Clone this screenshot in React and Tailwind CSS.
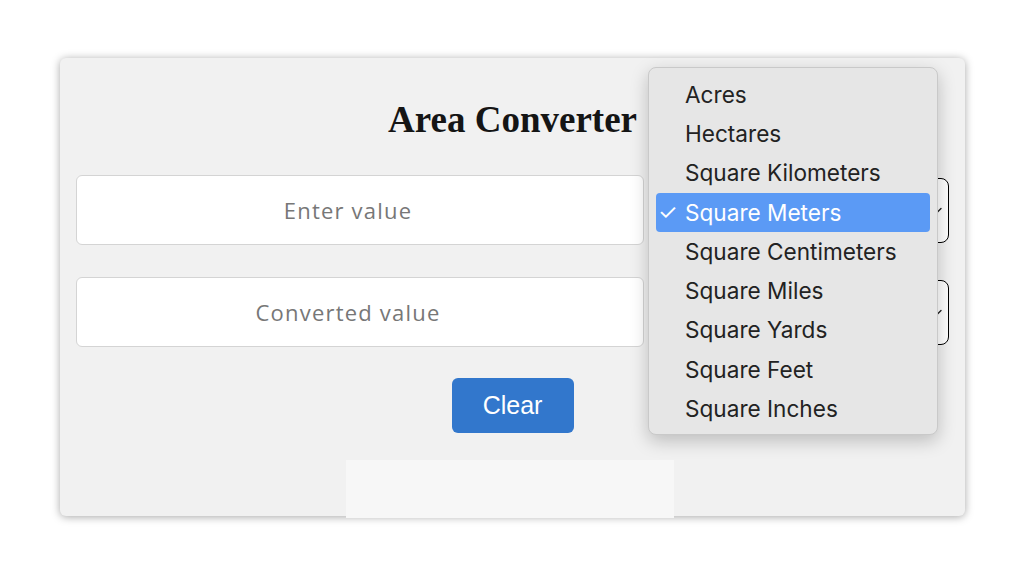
import { useState } from 'react'

const units = [
    'Acres',
    'Hectares',
    'Square Kilometers',
    'Square Meters',
    'Square Centimeters',
    'Square Miles',
    'Square Yards',
    'Square Feet',
    'Square Inches',
]

function UnitSelect() {
    return (
        <div className="relative w-[299px] h-[65px] rounded-[8px] border border-black bg-white">
            <svg className="absolute right-[6px] top-[28px]" width="12" height="8" viewBox="0 0 12 8" fill="none">
                <path d="M1 1.5 L6 6.5 L11 1.5" stroke="#222" strokeWidth="1.4" strokeLinecap="round" />
            </svg>
        </div>
    )
}

export default function App() {
    const [value, setValue] = useState('')
    const [selected] = useState('Square Meters')

    return (
        <div className="w-[1024px] h-[576px] bg-white pt-[58px] pl-[60px]">
            <div className="relative w-[905px] h-[458px] rounded-[6px] bg-[#f1f1f1] shadow-[0_1px_8px_rgba(0,0,0,0.35)] px-[16px] pt-[97px] flex flex-col">
                {/* titolo */}
                <h1
                    className="absolute left-0 right-0 top-[40px] text-center text-[37px] leading-[44px] font-bold text-[#151515]"
                    style={{ fontFamily: '"Liberation Serif", serif' }}
                >
                    Area Converter
                </h1>

                {/* riga input */}
                <div className="flex items-center gap-[6px] mt-[20px]">
                    <input
                        value={value}
                        onChange={e => setValue(e.target.value)}
                        placeholder="Enter value"
                        className="w-[568px] h-[70px] rounded-[6px] border border-[#d4d4d4] bg-white pr-[24px] text-center text-[22px] tracking-[1.2px] text-[#333] placeholder:text-[#777] outline-none"
                        style={{ fontFamily: '"Open Sans", sans-serif' }}
                    />
                    <UnitSelect />
                </div>

                <div className="flex items-center gap-[6px] mt-[32px]">
                    <input
                        readOnly
                        placeholder="Converted value"
                        className="w-[568px] h-[70px] rounded-[6px] border border-[#d4d4d4] bg-white pr-[24px] text-center text-[22px] tracking-[1.2px] placeholder:text-[#777] outline-none"
                        style={{ fontFamily: '"Open Sans", sans-serif' }}
                    />
                    <UnitSelect />
                </div>

                <div className="flex justify-center mt-[31px]">
                    <button
                        onClick={() => setValue('')}
                        className="w-[122px] h-[55px] rounded-[6px] bg-[#3277cc] text-white text-[25px]"
                        style={{ fontFamily: '"Liberation Sans", Arial, sans-serif' }}
                    >
                        Clear
                    </button>
                </div>

                <div className="mt-[27px] mb-[-3px] self-center ml-[-6px] w-[328px] h-[58px] bg-[#f7f7f7]" />

                {/* menu a tendina aperto */}
                <div
                    className="absolute left-[588px] top-[9px] w-[290px] h-[368px] rounded-[8px] border border-[#c9c9c9] bg-[#e6e6e6] shadow-[0_6px_18px_rgba(0,0,0,0.22)] px-[7px] pt-[7px]"
                    style={{ fontFamily: 'Inter, "Liberation Sans", sans-serif' }}
                >
                    {units.map(u => {
                        const active = u === selected
                        return (
                            <div
                                key={u}
                                className={
                                    'relative h-[39.3px] flex items-center pl-[29px] text-[22.6px] rounded-[4px] ' +
                                    (active ? 'bg-[#5b9af5] text-white' : 'text-[#222]')
                                }
                            >
                                {active && <span className="absolute left-[2px] text-[22px]">✓</span>}
                                {u}
                            </div>
                        )
                    })}
                </div>
            </div>
        </div>
    )
}
